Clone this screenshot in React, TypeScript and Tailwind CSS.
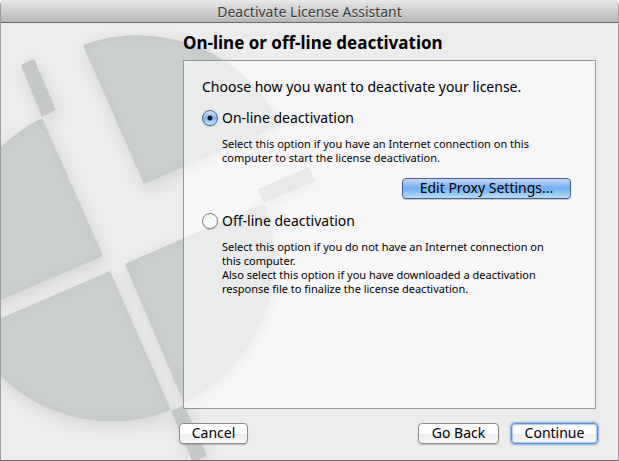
import { useState } from 'react';
import type { ReactNode } from 'react';
import clsx from 'clsx';

type Mode = 'online' | 'offline';

interface OptionProps {
  value: Mode;
  label: string;
  selected: Mode;
  onSelect: (mode: Mode) => void;
  children: ReactNode;
}

interface PushButtonProps {
  className?: string;
  children: ReactNode;
}

/**
 * Large crosshair emblem behind the window content
 */
function Emblem() {
  return (
    <svg
      className="pointer-events-none absolute -left-px top-0"
      width="340"
      height="461"
      viewBox="0 0 340 461"
      aria-hidden="true"
    >
      <defs>
        <filter id="soft" x="-20%" y="-20%" width="140%" height="140%">
          <feGaussianBlur stdDeviation="7" />
        </filter>
        <filter id="edge" x="-20%" y="-20%" width="140%" height="140%">
          <feGaussianBlur stdDeviation="4" />
        </filter>
        <g id="quadrants">
          <path d="M83 45 A159 159 0 0 1 281 125 L144 184 Z" />
          <path d="M42 118 A159 159 0 0 0 -37 316 L103 256 Z" />
          <path d="M110 271 L-31 332 A159 159 0 0 0 171 410 Z" />
          <path d="M125 264 L264 203 A159 159 0 0 1 184 403 Z" />
        </g>
        <g id="bars">
          <path d="M21 65 L34 59 L56 110 L42 117 Z" />
          <path d="M258 189 L309 167 L315 181 L264 203 Z" />
          <path d="M171 411 L184 405 L207 456 L193 462 Z" />
        </g>
        <clipPath id="quadrantClip">
          <path d="M83 45 A159 159 0 0 1 281 125 L144 184 Z" />
          <path d="M42 118 A159 159 0 0 0 -37 316 L103 256 Z" />
          <path d="M110 271 L-31 332 A159 159 0 0 0 171 410 Z" />
          <path d="M125 264 L264 203 A159 159 0 0 1 184 403 Z" />
        </clipPath>
      </defs>
      <g fill="#b4b1b1" opacity="0.4" filter="url(#soft)" transform="translate(2 5)">
        <use href="#quadrants" />
        <use href="#bars" />
      </g>
      <use href="#quadrants" fill="#cbcfd0" />
      <g clipPath="url(#quadrantClip)">
        <use
          href="#quadrants"
          fill="none"
          stroke="#bec3c3"
          strokeWidth="5"
          opacity="0.7"
          filter="url(#edge)"
        />
      </g>
      <use href="#bars" fill="#c4c8c8" />
    </svg>
  );
}

function PushButton({ className, children }: PushButtonProps) {
  return (
    <button
      type="button"
      className={clsx(
        'flex h-[21px] items-center justify-center rounded-[4px] border pb-0.5 text-sm leading-4',
        className,
      )}
    >
      {children}
    </button>
  );
}

function Option({ value, label, selected, onSelect, children }: OptionProps) {
  return (
    <div>
      <div className="flex h-4 items-center gap-1">
        <input
          id={value}
          type="radio"
          name="mode"
          checked={selected === value}
          onChange={() => onSelect(value)}
          className="size-4 shrink-0 appearance-none rounded-full border border-[#808080] bg-linear-to-b from-[#f2f2f2] to-white shadow-[0_1px_1px_rgba(0,0,0,0.2)] checked:border-[#4f6596] checked:bg-[radial-gradient(circle_at_50%_50%,#0b1a30_2px,transparent_3px),linear-gradient(#d5e6f8,#82b4ec_50%,#c0ecff)]"
        />
        <label htmlFor={value} className="text-sm leading-4">
          {label}
        </label>
      </div>
      <div className="ml-5 mt-[11px] text-[11px] leading-[14px]">{children}</div>
    </div>
  );
}

export default function App() {
  const [mode, setMode] = useState<Mode>('online');

  return (
    <div className="relative flex min-h-screen flex-col overflow-hidden rounded-t-[5px] border border-t-0 border-[#a0a0a0] border-b-[#666] bg-[#ececec] font-['Noto_Sans','Lucida_Grande',sans-serif] text-black">
      <Emblem />

      {/* Title bar */}
      <header className="relative flex h-[23px] items-center justify-center border-b border-[#6a6a6a] bg-linear-to-b from-[#e8e8e8] to-[#b6b6b6]">
        <h1 className="pt-px text-sm leading-4 text-[#3c3c3c] [text-shadow:0_1px_0_rgba(255,255,255,0.5)]">
          Deactivate License Assistant
        </h1>
      </header>

      {/* Content */}
      <main className="relative ml-[182px] mr-[22px] flex flex-1 flex-col pt-2">
        <h2 className="text-[17px] leading-6 font-bold">On-line or off-line deactivation</h2>
        <section className="mt-[5px] flex-1 border border-[#989898] bg-white/60 px-[18px] pt-[18px] pb-4">
          <p className="text-sm leading-4">Choose how you want to deactivate your license.</p>
          <div className="mt-[15px]">
            <Option value="online" label="On-line deactivation" selected={mode} onSelect={setMode}>
              <p>
                Select this option if you have an Internet connection on this
                <br />
                computer to start the license deactivation.
              </p>
            </Option>
          </div>
          <div className="mt-[13px] mr-[6px] flex justify-end">
            <PushButton className="w-[169px] border-[#4a5c98] bg-linear-to-b from-[#c2d8f3] via-[#70adef] to-[#b5e0ff] shadow-[0_1px_1px_rgba(0,0,0,0.2)]">
              Edit Proxy Settings...
            </PushButton>
          </div>
          <div className="mt-[14px]">
            <Option
              value="offline"
              label="Off-line deactivation"
              selected={mode}
              onSelect={setMode}
            >
              <p>
                Select this option if you do not have an Internet connection on
                <br />
                this computer.
              </p>
              <p>
                Also select this option if you have downloaded a deactivation
                <br />
                response file to finalize the license deactivation.
              </p>
            </Option>
          </div>
        </section>
      </main>

      {/* Buttons */}
      <footer className="relative ml-[178px] mr-5 flex gap-3 pt-[14px] pb-4">
        <PushButton className="mr-auto w-[69px] border-[#8c8c8c] bg-[linear-gradient(#ffffff_50%,#ececec_55%,#fafafa)] shadow-[0_1px_1px_rgba(0,0,0,0.2)]">
          Cancel
        </PushButton>
        <PushButton className="w-[81px] border-[#8c8c8c] bg-[linear-gradient(#ffffff_50%,#ececec_55%,#fafafa)] shadow-[0_1px_1px_rgba(0,0,0,0.2)]">
          Go Back
        </PushButton>
        <PushButton className="w-[87px] border-[#5f8fc6] bg-[linear-gradient(#ffffff_50%,#ececec_55%,#fafafa)] shadow-[0_0_2px_1px_#7fb0e4,inset_0_0_1px_1px_#a9caec]">
          Continue
        </PushButton>
      </footer>
    </div>
  );
}
